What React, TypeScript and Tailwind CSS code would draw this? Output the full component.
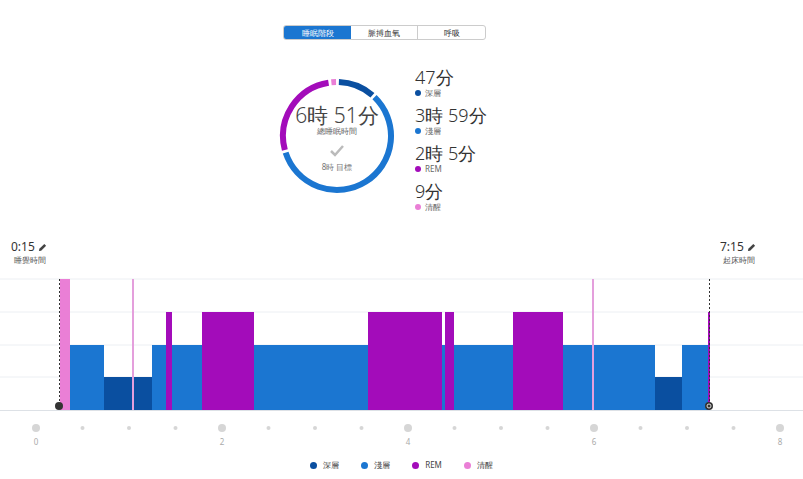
import React from "react";

const C = { deep: "#0a4fa0", light: "#1b76d1", rem: "#a30cba", awake: "#ea7fd6" };
const X = (h: number) => 36 + h * 93;

const rows: Record<string, [number, number]> = {
  awake: [279, 410],
  rem: [312, 410],
  light: [345, 410],
  deep: [377, 410],
};

const segs: [string, number, number][] = [
  ["awake", 60, 70], ["light", 70, 104], ["deep", 104, 152], ["light", 152, 166],
  ["rem", 166, 172], ["light", 172, 202], ["rem", 202, 254], ["light", 254, 368],
  ["rem", 368, 442], ["light", 442, 445], ["rem", 445, 454], ["light", 454, 513],
  ["rem", 513, 563], ["light", 563, 655], ["deep", 655, 682], ["light", 682, 709],
];

function arc(cx: number, cy: number, r: number, a0: number, a1: number) {
  const p = (a: number) => {
    const t = ((a - 90) * Math.PI) / 180;
    return [cx + r * Math.cos(t), cy + r * Math.sin(t)];
  };
  const [x0, y0] = p(a0);
  const [x1, y1] = p(a1);
  return `M${x0} ${y0} A${r} ${r} 0 ${a1 - a0 > 180 ? 1 : 0} 1 ${x1} ${y1}`;
}

function Donut() {
  return (
    <div className="relative w-[116px] h-[116px]">
      <svg width="116" height="116" className="absolute inset-0">
        <path d={arc(58, 58, 54, 2, 41)} stroke={C.deep} strokeWidth="6" fill="none" />
        <path d={arc(58, 58, 54, 44, 252)} stroke={C.light} strokeWidth="6" fill="none" />
        <path d={arc(58, 58, 54, 255, 351)} stroke={C.rem} strokeWidth="6" fill="none" />
        <path d={arc(58, 58, 54, 354, 359)} stroke={C.awake} strokeWidth="6" fill="none" />
      </svg>
      <div className="absolute inset-0 flex flex-col items-center pt-[26px]">
        <div className="text-[21px] leading-[22px] font-light text-[#444]">6時 51分</div>
        <div className="text-[8px] leading-[10px] text-[#666]">總睡眠時間</div>
        <svg width="14" height="12" viewBox="0 0 14 12" className="mt-[9px]">
          <path d="M1 6 L5 10 L13 1" stroke="#bbb" strokeWidth="2.5" fill="none" />
        </svg>
        <div className="text-[8px] leading-[10px] text-[#777] mt-[5px]">8時 目標</div>
      </div>
    </div>
  );
}

function Stat({ v, label, color }: { v: string; label: string; color: string }) {
  return (
    <div className="h-[38px]">
      <div className="text-[18px] leading-[22px] font-light text-[#333]">{v}</div>
      <div className="flex items-center gap-[4px] text-[8px] leading-[10px] text-[#666]">
        <span className="w-[6px] h-[6px] rounded-full" style={{ background: color }} />
        {label}
      </div>
    </div>
  );
}

const Pencil = () => (
  <svg width="9" height="9" viewBox="0 0 10 10">
    <path d="M1 9 L1.5 6.5 L7 1 L9 3 L3.5 8.5 Z" fill="#444" />
  </svg>
);

export default function App() {
  return (
    <div className="w-[803px] h-[479px] bg-white relative font-['Noto_Sans_CJK_TC','Noto_Sans',sans-serif] overflow-hidden">
      <div className="pt-[25px] flex justify-center">
        <div className="flex border border-[#ccc] rounded-[3px] overflow-hidden text-[8px] h-[15px] ml-[-34px]">
          <div className="w-[67px] bg-[#1b76d1] text-white flex items-center justify-center">睡眠階段</div>
          <div className="w-[67px] border-r border-[#ccc] text-[#333] flex items-center justify-center">脈搏血氧</div>
          <div className="w-[67px] text-[#333] flex items-center justify-center">呼吸</div>
        </div>
      </div>
      <div className="flex ml-[279px] mt-[26px] gap-[20px]">
        <div className="mt-[12px]"><Donut /></div>
        <div>
          <Stat v="47分" label="深層" color={C.deep} />
          <Stat v="3時 59分" label="淺層" color={C.light} />
          <Stat v="2時 5分" label="REM" color={C.rem} />
          <Stat v="9分" label="清醒" color={C.awake} />
        </div>
      </div>
      <div className="absolute left-[11px] top-[240px]">
        <div className="flex items-center gap-[3px] text-[12px] leading-[14px] text-[#333]">0:15 <Pencil /></div>
        <div className="text-[8px] leading-[12px] text-[#555] ml-[3px]">睡覺時間</div>
      </div>
      <div className="absolute left-[720px] top-[240px]">
        <div className="flex items-center gap-[3px] text-[12px] leading-[14px] text-[#333]">7:15 <Pencil /></div>
        <div className="text-[8px] leading-[12px] text-[#555] ml-[3px]">起床時間</div>
      </div>
      <svg width="803" height="479" className="absolute inset-0 pointer-events-none">
        {[279, 312, 345, 377].map((y) => (
          <line key={y} x1="0" x2="803" y1={y} y2={y} stroke="#eceff3" />
        ))}
        <line x1="0" x2="803" y1="410.5" y2="410.5" stroke="#dde1e6" />
        {segs.map(([k, a, b], i) => (
          <rect key={i} x={a} y={rows[k][0]} width={b - a} height={rows[k][1] - rows[k][0]} fill={(C as any)[k]} />
        ))}
        <rect x="132" y="279" width="2" height="131" fill="#e49fdc" />
        <rect x="592" y="279" width="2" height="131" fill="#e49fdc" />
        <rect x="708" y="312" width="2" height="98" fill={C.rem} />
        <line x1="59.5" x2="59.5" y1="279" y2="408" stroke="#333" strokeDasharray="2 2" />
        <line x1="709.5" x2="709.5" y1="279" y2="408" stroke="#333" strokeDasharray="2 2" />
        <circle cx="59" cy="406" r="4" fill="#333" />
        <circle cx="709" cy="406" r="4" fill="#333" />
        <circle cx="709" cy="406" r="2" fill="none" stroke="#fff" strokeWidth="0.8" />
        {Array.from({ length: 17 }, (_, i) => (
          <circle key={i} cx={X(i / 2)} cy="428" r={i % 4 === 0 ? 4 : 2} fill="#d6d6d6" />
        ))}
        {[0, 2, 4, 6, 8].map((h) => (
          <text key={h} x={X(h)} y="445" fontSize="8" fill="#aaa" textAnchor="middle" fontFamily="Noto Sans">{h}</text>
        ))}
      </svg>
      <div className="absolute top-[459px] left-0 w-full flex justify-center gap-[22px] text-[8px] leading-[12px] text-[#444]">
        {[["深層", C.deep], ["淺層", C.light], ["REM", C.rem], ["清醒", C.awake]].map(([l, c]) => (
          <div key={l} className="flex items-center gap-[6px]">
            <span className="w-[7px] h-[7px] rounded-full" style={{ background: c }} />
            {l}
          </div>
        ))}
      </div>
    </div>
  );
}
